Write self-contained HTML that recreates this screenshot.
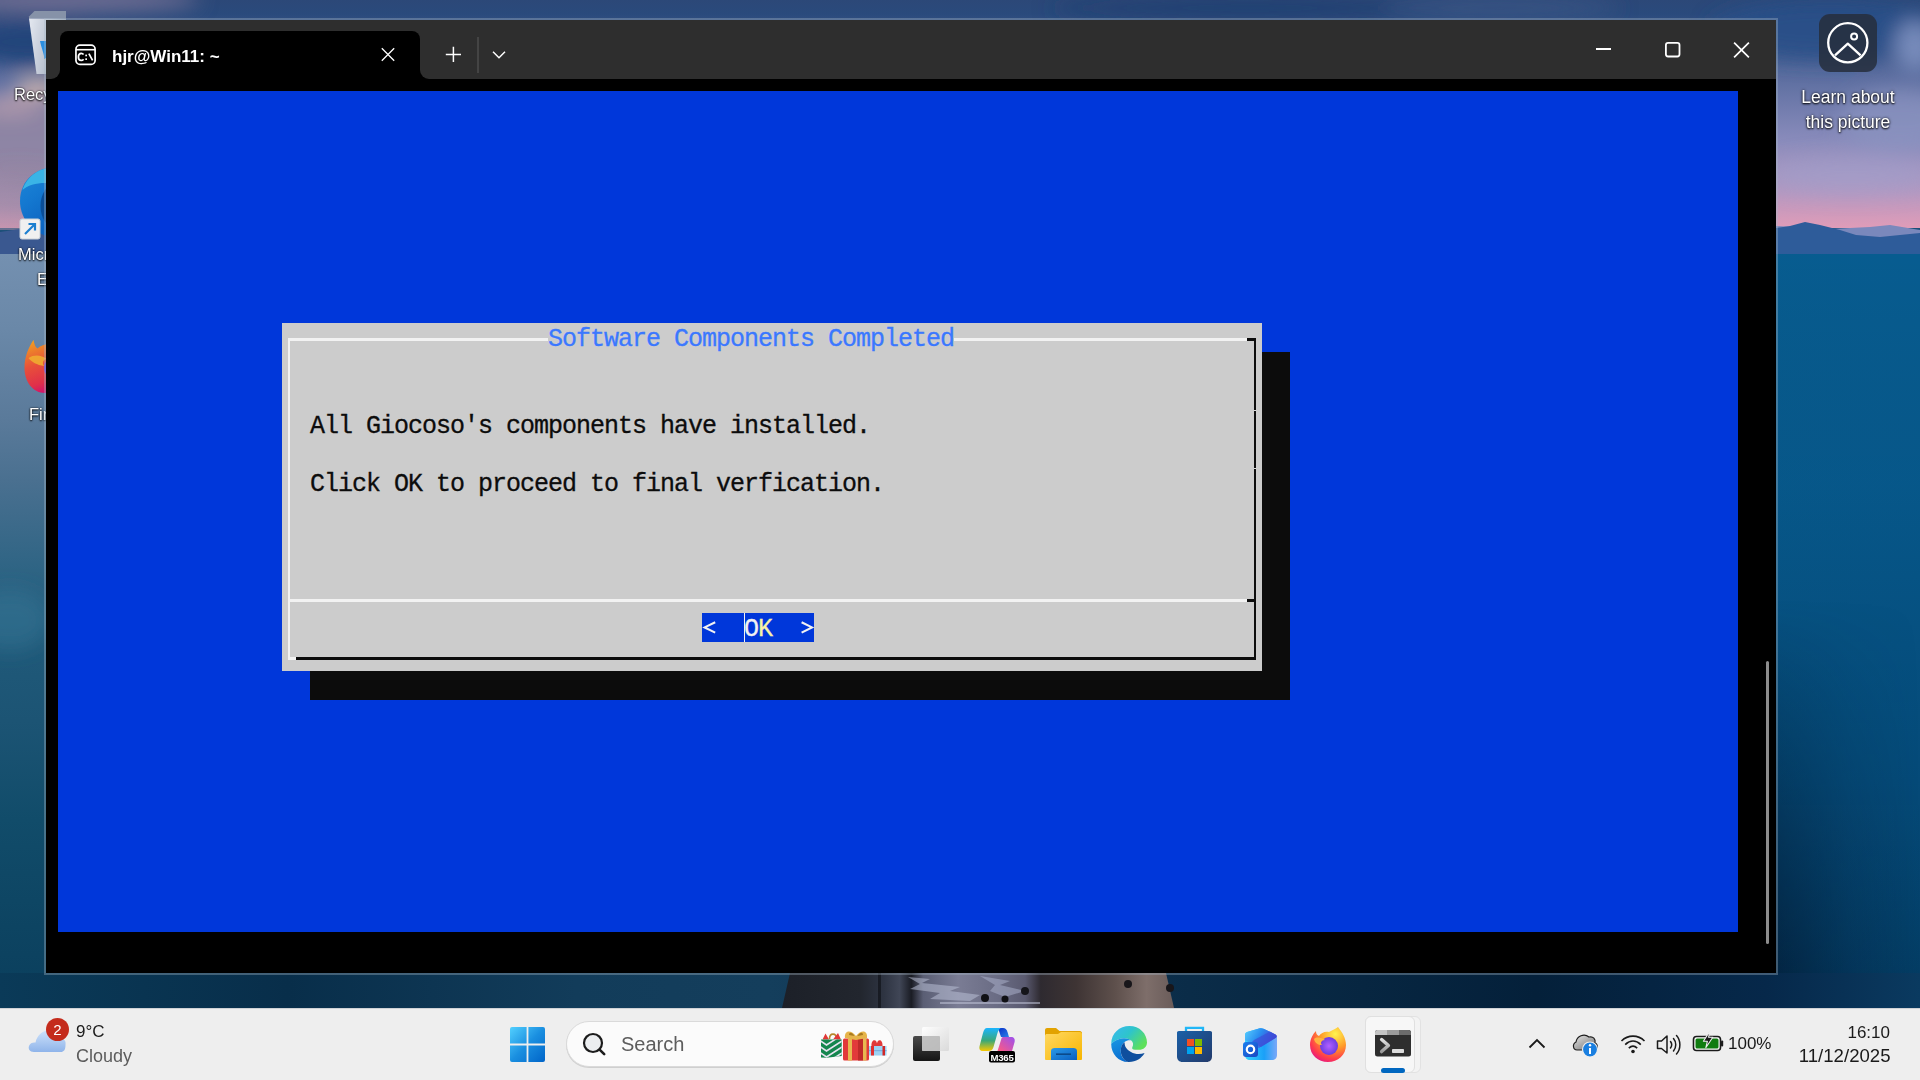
<!DOCTYPE html>
<html><head><meta charset="utf-8">
<style>
*{margin:0;padding:0;box-sizing:border-box}
html,body{width:1920px;height:1080px;overflow:hidden;background:#1a4f78}
body{position:relative;font-family:"Liberation Sans",sans-serif}
.abs{position:absolute}
#wall{left:0;top:0;width:1920px;height:1080px;
 background:
  linear-gradient(180deg,#2a4675 0px,#2e4c7c 30px,#3f5a8c 70px,#55699c 110px,#7a80b4 150px,#9a92c6 185px,#b69ac4 205px,#d39cbc 217px,#c898b8 222px,#52689c 226px,#3f5a90 240px,#2c5888 254px,#1a5c8a 257px,#175a86 350px,#135581 500px,#0f4d76 700px,#0c4369 850px,#0a3656 980px,#0a3352 1080px);}
#wallL{left:0;top:0;width:46px;height:1008px;
 background:linear-gradient(180deg,#5f6890 0px,#2c4a7c 25px,#1f4374 50px,#5c6890 75px,#9a8ea8 95px,#a894ac 130px,#9e8ea8 170px,#b294ae 205px,#c49cb2 218px,#4a5a90 226px,#3a5288 245px,#7894b4 256px,#7090ae 300px,#6888a8 400px,#5a7e9e 470px,#3a6c8c 560px,#1e5c7c 680px,#154f6e 820px,#0e4262 940px,#0b3852 1008px)}
#rightS{left:1776px;top:0;width:144px;height:1008px;
 background:
  radial-gradient(ellipse 90px 40px at 120px 130px,rgba(170,170,210,0.55),rgba(170,170,210,0) 100%),
  radial-gradient(ellipse 120px 30px at 60px 180px,rgba(200,180,220,0.5),rgba(200,180,220,0) 100%),
  linear-gradient(180deg,#2b4a7a 0px,#2f4e80 40px,#4a6496 80px,#5e70a4 115px,#8088bc 150px,#9f96c8 185px,#c49cc4 208px,#dc9cb8 220px,#7e88bc 224px,#4a6298 236px,#3d5a8e 248px,#2a5a88 254px,#1b5e8c 257px,#185b88 400px,#135584 600px,#0f4c78 800px,#0b3c62 940px,#0a3252 1008px)}
#botS{left:0;top:973px;width:1920px;height:35px;background:linear-gradient(90deg,#0c3e5a 0%,#0c3550 20%,#0d3049 40%,#0c2c46 70%,#0b3350 100%)}
#win{left:44px;top:18px;width:1734px;height:957px;background:#000;border:2px solid rgba(170,185,200,0.36);background-clip:padding-box}
#titlebar{left:46px;top:20px;width:1730px;height:59px;background:#2e2e2e}
#tab{left:60px;top:31px;width:360px;height:48px;background:#000;border-radius:8px 8px 0 0}
#term{left:46px;top:79px;width:1730px;height:894px;background:#000}
#blue{left:58px;top:91px;width:1680px;height:841px;background:#0037da}
.dt{color:#fff;font-size:16.5px;line-height:20px;white-space:pre;text-shadow:0 1px 2px #000,0 0 2px rgba(0,0,0,.9)}
.mono{font-family:"Liberation Mono",monospace;font-size:25px;letter-spacing:-1px;line-height:29px;white-space:pre;height:29px;-webkit-text-stroke:0.3px currentColor}
</style></head><body>
<svg class="abs" style="left:0;top:0" width="1920" height="1080" viewBox="0 0 1920 1080">
 <defs>
  <linearGradient id="sky" x1="0" y1="0" x2="0" y2="1">
   <stop offset="0" stop-color="#2c4878"/><stop offset="0.06" stop-color="#2a4a7c"/><stop offset="0.3" stop-color="#566a9c"/>
   <stop offset="0.62" stop-color="#8a8cbc"/><stop offset="0.85" stop-color="#b898c0"/><stop offset="1" stop-color="#e09cb8"/>
  </linearGradient>
  <linearGradient id="lake" x1="0" y1="0" x2="1" y2="0">
   <stop offset="0" stop-color="#0d5c8c"/><stop offset="1" stop-color="#075c90"/>
  </linearGradient>
  <linearGradient id="lakeV" x1="0" y1="0" x2="0" y2="1">
   <stop offset="0" stop-color="#000" stop-opacity="0"/><stop offset="0.3" stop-color="#002040" stop-opacity="0.08"/><stop offset="0.7" stop-color="#002040" stop-opacity="0.3"/><stop offset="1" stop-color="#001830" stop-opacity="0.5"/>
  </linearGradient>
  <linearGradient id="lakeL" x1="0" y1="0" x2="0" y2="1">
   <stop offset="0" stop-color="#7490b0"/><stop offset="0.1" stop-color="#6a88a8"/><stop offset="0.22" stop-color="#5a7a9a"/><stop offset="0.3" stop-color="#4a7090"/><stop offset="0.42" stop-color="#2e6484"/><stop offset="0.5" stop-color="#205a7a"/><stop offset="0.62" stop-color="#1c5474"/><stop offset="0.75" stop-color="#114c6a"/><stop offset="1" stop-color="#0a3e5c"/>
  </linearGradient>
  <filter id="bl" x="-50%" y="-50%" width="200%" height="200%"><feGaussianBlur stdDeviation="10"/></filter>
  <filter id="bl2" x="-50%" y="-50%" width="200%" height="200%"><feGaussianBlur stdDeviation="4"/></filter>
 </defs>
 <rect x="0" y="0" width="1920" height="228" fill="url(#sky)"/>
 <!-- top navy band variation -->
 <g filter="url(#bl)">
  <ellipse cx="60" cy="0" rx="140" ry="12" fill="#7a7498" opacity="0.9"/>
  <ellipse cx="30" cy="42" rx="70" ry="22" fill="#22457a"/>
  <ellipse cx="30" cy="140" rx="70" ry="48" fill="#8e84a2" opacity="0.9"/>
  <ellipse cx="38" cy="86" rx="22" ry="7" fill="#e8c8b0" opacity="0.9"/>
  <ellipse cx="10" cy="105" rx="30" ry="10" fill="#c8a8b0" opacity="0.6"/>
  <ellipse cx="20" cy="190" rx="60" ry="25" fill="#9a88a4" opacity="0.7"/>
  <ellipse cx="1830" cy="30" rx="120" ry="30" fill="#2a5088" opacity="0.9"/>
  <ellipse cx="1915" cy="45" rx="20" ry="25" fill="#8a9ac8" opacity="0.8"/>
  <ellipse cx="1900" cy="120" rx="60" ry="30" fill="#8a94c0" opacity="0.7"/>
  <ellipse cx="1850" cy="175" rx="90" ry="18" fill="#a0a0cc" opacity="0.6"/>
  <ellipse cx="1250" cy="8" rx="200" ry="12" fill="#1e3f70" opacity="0.8"/>
  <ellipse cx="1500" cy="8" rx="120" ry="10" fill="#3e5888" opacity="0.7"/>
 </g>
 <defs><linearGradient id="lpk" x1="0" y1="0" x2="0" y2="1"><stop offset="0" stop-color="#9088a8" stop-opacity="0"/><stop offset="0.7" stop-color="#a08ca8" stop-opacity="0.45"/><stop offset="1" stop-color="#b090a8" stop-opacity="0.5"/></linearGradient></defs>
 <rect x="0" y="150" width="46" height="80" fill="url(#lpk)"/>
 <!-- distant mountains -->
 <path d="M1776 226 L1830 229 L1870 227 L1890 225 L1920 230 L1920 254 L1776 254Z" fill="#7a88bc"/>
 <!-- mountains -->
 <path d="M0 232 L20 229 L40 230 L60 234 L60 254 L0 254Z" fill="#3a5890"/>
 <path d="M1776 228 L1790 226 L1805 222 L1820 225 L1840 230 L1856 235 L1880 237 L1900 235 L1920 233 L1920 254 L1776 254Z" fill="#2e5c9a"/>
 <!-- lake -->
 <rect x="0" y="254" width="1920" height="754" fill="url(#lake)"/>
 <rect x="0" y="254" width="1920" height="754" fill="url(#lakeV)"/>
 <rect x="0" y="254" width="46" height="754" fill="url(#lakeL)"/>
 <g filter="url(#bl)">
  <ellipse cx="10" cy="620" rx="40" ry="30" fill="#3a7898" opacity="0.5"/>
 </g>
 <!-- bottom strip -->
 <defs><linearGradient id="botg" x1="0" y1="0" x2="1" y2="0"><stop offset="0" stop-color="#0a3a58"/><stop offset="0.15" stop-color="#082e4a"/><stop offset="0.3" stop-color="#123c5a"/><stop offset="0.4" stop-color="#143e5c"/><stop offset="0.62" stop-color="#0a2c48"/><stop offset="0.8" stop-color="#04203a"/><stop offset="0.92" stop-color="#06284a"/><stop offset="1" stop-color="#0a3a60"/></linearGradient>
 <linearGradient id="rdark" x1="0" y1="0" x2="1" y2="0"><stop offset="0" stop-color="#021830" stop-opacity="0.7"/><stop offset="0.5" stop-color="#021830" stop-opacity="0.25"/><stop offset="1" stop-color="#021830" stop-opacity="0"/></linearGradient>
 <linearGradient id="rdarkV" x1="0" y1="0" x2="0" y2="1"><stop offset="0" stop-color="#fff" stop-opacity="0"/><stop offset="1" stop-color="#fff" stop-opacity="1"/></linearGradient>
 <mask id="rmask"><rect x="1776" y="600" width="144" height="410" fill="url(#rdarkV)"/></mask></defs>
 <rect x="1776" y="600" width="144" height="410" fill="url(#rdark)" mask="url(#rmask)"/>
 <rect x="0" y="973" width="1920" height="35" fill="url(#botg)"/>
</svg>
<svg class="abs" style="left:780px;top:973px" width="396" height="35" viewBox="0 0 396 35">
 <defs><linearGradient id="rk" x1="0" y1="0" x2="1" y2="0">
  <stop offset="0" stop-color="#1c2028"/><stop offset="0.2" stop-color="#22262e"/><stop offset="0.26" stop-color="#2e3442"/><stop offset="0.3" stop-color="#404656"/>
  <stop offset="0.33" stop-color="#1a1c24"/><stop offset="0.36" stop-color="#5a5e74"/><stop offset="0.45" stop-color="#7a7c94"/><stop offset="0.55" stop-color="#6a6c84"/><stop offset="0.62" stop-color="#5a5a70"/>
  <stop offset="0.66" stop-color="#2e2a30"/><stop offset="0.75" stop-color="#3e3434"/><stop offset="0.85" stop-color="#5e504c"/><stop offset="0.93" stop-color="#7e6e6a"/><stop offset="1" stop-color="#6a5c5a"/>
 </linearGradient></defs>
 <path d="M2 35 L10 0 H386 L394 35Z" fill="url(#rk)"/>
 <g opacity="0.55">
  <path d="M128 4 L150 6 L142 10 L180 14 L170 18 L200 22 L190 28 L150 26 L160 20 L130 16 L140 11Z" fill="#b8bed4"/>
  <path d="M200 3 L230 8 L220 12 L245 18 L225 24 L210 18 L215 12Z" fill="#a8aec8"/>
  <rect x="160" y="29" width="100" height="2" fill="#c0c4d8"/>
 </g>
 <circle cx="205" cy="25" r="4" fill="#101014"/><circle cx="225" cy="26" r="3.5" fill="#101014"/><circle cx="245" cy="18" r="4" fill="#15151a"/>
 <circle cx="348" cy="11" r="4" fill="#18161a"/><circle cx="390" cy="15" r="4" fill="#18161a"/>
 <rect x="98" y="0" width="3" height="35" fill="#0c0e12" opacity="0.6"/>
</svg>

<!-- desktop icons -->
<svg class="abs" style="left:26px;top:11px" width="40" height="66" viewBox="0 0 40 66">
 <defs><linearGradient id="rb" x1="0" y1="0" x2="1" y2="0.3"><stop offset="0" stop-color="#e4e8f0"/><stop offset="0.6" stop-color="#bcc4d2"/><stop offset="1" stop-color="#9aa6b8"/></linearGradient></defs>
 <path d="M3 5.5 L8.5 0 H40 V7.5 H3Z" fill="#8692a8"/>
 <path d="M3 7.5 H40 V63 H10.5 Z" fill="url(#rb)"/>
 <path d="M14 30 C15 36 19 45 18 48 L24 45 C21 42 20 34 21 30Z" fill="#2a8ee0"/>
</svg>
<div class="abs dt" style="left:14px;top:84px">Recycle Bin</div>
<svg class="abs" style="left:16px;top:165px" width="40" height="75" viewBox="0 0 40 75">
 <defs><linearGradient id="de" x1="0" y1="0" x2="0.4" y2="1"><stop offset="0" stop-color="#1e88d8"/><stop offset="0.5" stop-color="#1478d0"/><stop offset="1" stop-color="#0c64c0"/></linearGradient></defs>
 <path d="M40 2 C22 2 4 14 4 36 C4 56 20 72 40 72Z" fill="url(#de)"/>
 <path d="M40 2 C24 2 11 11 6.5 25 C13 19 26 16.5 40 19Z" fill="#3ab4e6"/>
 <path d="M40 17 C31 19 24.5 29 24.5 41 C24.5 53 31 62 40 66Z" fill="#0a4e98"/>
 <rect x="4" y="54" width="20" height="20" rx="2" fill="#f0f0f0" stroke="#c8d0d8" stroke-width="1"/>
 <path d="M9 69 L19 59 M12.5 59 H19 V65.5" stroke="#1b7fd0" stroke-width="2.2" fill="none"/>
</svg>
<div class="abs dt" style="left:18px;top:244px">Microsoft</div>
<div class="abs dt" style="left:37px;top:269px">Edge</div>
<svg class="abs" style="left:22px;top:336px" width="40" height="60" viewBox="0 0 40 60">
 <defs><linearGradient id="dff" x1="0.2" y1="0" x2="0.5" y2="1"><stop offset="0" stop-color="#f0a020"/><stop offset="0.45" stop-color="#e8503a"/><stop offset="0.8" stop-color="#e0304a"/><stop offset="1" stop-color="#d0106e"/></linearGradient></defs>
 <path d="M2.5 32 C2.5 20 7 11 11.5 3.8 C12.5 9 13.5 11 15.5 12.5 C18.5 9.5 23 8 27 8 C33 8 44 16 44 32 C44 46 34 57 23 57 C11 57 2.5 46 2.5 32Z" fill="url(#dff)"/>
 <path d="M6.5 22 C12 18 20 19 24.5 23 C21 23.5 20 27 22 30 C15 29 9.5 26 6.5 22Z" fill="#f0b030" opacity="0.85"/>
 <circle cx="33" cy="32" r="11" fill="#6a3ad0"/>
</svg>
<div class="abs dt" style="left:29px;top:404px">Firefox</div>
<!-- learn about picture -->
<div class="abs" style="left:1819px;top:14px;width:58px;height:58px;border-radius:11px;background:rgba(38,46,60,0.85)"></div>
<svg class="abs" style="left:1824px;top:18px" width="48" height="48" viewBox="0 0 48 48">
 <circle cx="23.8" cy="24.8" r="19.6" fill="none" stroke="#fff" stroke-width="2.3"/>
 <circle cx="30.1" cy="18.6" r="3" fill="none" stroke="#fff" stroke-width="2"/>
 <path d="M11 37.4 L23.8 25.6 L36.6 37.4" fill="none" stroke="#fff" stroke-width="2.3" stroke-linejoin="round"/>
</svg>
<div class="abs" style="left:1788px;top:85px;width:120px;text-align:center;color:#fff;font-size:17.5px;line-height:25px;text-shadow:0 1px 2px #000,0 0 3px rgba(0,0,0,.8)">Learn about<br>this picture</div>
<div id="win" class="abs"></div>
<div id="titlebar" class="abs"></div>
<div id="tab" class="abs"></div>
<div id="term" class="abs"></div>
<!-- tab outward corners -->
<div class="abs" style="left:50px;top:70px;width:10px;height:9px;background:#000"><div style="width:10px;height:9px;background:#2e2e2e;border-bottom-right-radius:9px"></div></div>
<div class="abs" style="left:420px;top:70px;width:10px;height:9px;background:#000"><div style="width:10px;height:9px;background:#2e2e2e;border-bottom-left-radius:9px"></div></div>
<!-- tab icon -->
<svg class="abs" style="left:70px;top:40px" width="32" height="30" viewBox="0 0 32 30">
 <rect x="5.95" y="5.2" width="19.15" height="19.2" rx="4" ry="4" fill="none" stroke="#fff" stroke-width="1.7"/>
 <line x1="6" y1="9.7" x2="25" y2="9.7" stroke="#fff" stroke-width="1.6"/>
 <path d="M13.6 14.6 C13 13.8 12.2 13.4 11.2 13.4 C9.5 13.4 8.4 14.8 8.4 16.9 C8.4 19 9.5 20.4 11.2 20.4 C12.2 20.4 13 20 13.6 19.2" fill="none" stroke="#fff" stroke-width="1.7"/>
 <rect x="15.3" y="14.6" width="1.7" height="1.7" fill="#fff"/><rect x="15.3" y="18.3" width="1.7" height="1.7" fill="#fff"/>
 <line x1="18.9" y1="13.6" x2="22.6" y2="20.4" stroke="#fff" stroke-width="1.7"/>
</svg>
<div class="abs" style="left:112px;top:45.5px;font-weight:bold;font-size:17px;color:#fff;line-height:22px;white-space:pre">hjr@Win11: ~</div>
<!-- tab close -->
<svg class="abs" style="left:380px;top:47px" width="16" height="16" viewBox="0 0 16 16"><path d="M1.8 1.2 L14.2 13.8 M14.2 1.2 L1.8 13.8" stroke="#fff" stroke-width="1.3"/></svg>
<!-- plus -->
<svg class="abs" style="left:444px;top:45px" width="18" height="18" viewBox="0 0 18 18"><path d="M9.4 1.8 V17 M1.8 9.4 H17" stroke="#fff" stroke-width="1.5"/></svg>
<div class="abs" style="left:477px;top:37px;width:2px;height:36px;background:#444"></div>
<svg class="abs" style="left:490px;top:48px" width="18" height="14" viewBox="0 0 18 14"><path d="M3 3.8 L9 9.8 L15 3.8" fill="none" stroke="#fff" stroke-width="1.5"/></svg>
<!-- window controls -->
<div class="abs" style="left:1596px;top:48px;width:15px;height:2px;background:#fff"></div>
<svg class="abs" style="left:1663px;top:40px" width="20" height="20" viewBox="0 0 20 20"><rect x="2.9" y="2.9" width="13.6" height="13.6" rx="2.2" fill="none" stroke="#fff" stroke-width="1.8"/></svg>
<svg class="abs" style="left:1731px;top:40px" width="20" height="20" viewBox="0 0 20 20"><path d="M3.1 2.6 L17.9 17.4 M17.9 2.6 L3.1 17.4" stroke="#fff" stroke-width="1.7"/></svg>
<div id="blue" class="abs"></div>
<div class="abs" style="left:1765.5px;top:661px;width:3px;height:283px;border-radius:1.5px;background:#8c8c8c"></div>

<!-- dialog shadow -->
<div class="abs" style="left:310px;top:352px;width:980px;height:348px;background:#0c0c0c"></div>
<!-- dialog -->
<div class="abs" style="left:282px;top:323px;width:980px;height:348px;background:#cccccc"></div>
<!-- borders -->
<div class="abs" style="left:288px;top:338px;width:260px;height:3px;background:#f2f2f2"></div>
<div class="abs" style="left:954px;top:338px;width:294px;height:3px;background:#f2f2f2"></div>
<div class="abs" style="left:1247px;top:338px;width:9px;height:3px;background:#0c0c0c"></div>
<div class="abs" style="left:288px;top:338px;width:2px;height:322px;background:#f2f2f2"></div>
<div class="abs" style="left:1254px;top:338px;width:2px;height:322px;background:#0c0c0c"></div>
<div class="abs" style="left:288px;top:599px;width:960px;height:3px;background:#f2f2f2"></div>
<div class="abs" style="left:1247px;top:599px;width:9px;height:3px;background:#0c0c0c"></div>
<div class="abs" style="left:1254px;top:410px;width:2px;height:1px;background:#dcdcdc"></div>
<div class="abs" style="left:1254px;top:468px;width:2px;height:1px;background:#dcdcdc"></div>
<div class="abs" style="left:288px;top:657px;width:8px;height:3px;background:#f2f2f2"></div>
<div class="abs" style="left:296px;top:657px;width:960px;height:3px;background:#0c0c0c"></div>
<!-- title -->
<div class="abs mono" style="left:548px;top:325px;color:#3b78ff">Software Components Completed</div>
<div class="abs mono" style="left:310px;top:412px;color:#0c0c0c">All Giocoso's components have installed.</div>
<div class="abs mono" style="left:310px;top:470px;color:#0c0c0c">Click OK to proceed to final verfication.</div>
<!-- button -->
<div class="abs" style="left:702px;top:613px;width:112px;height:29px;background:#0037da"></div>
<svg class="abs" style="left:700px;top:613px" width="20" height="29" viewBox="0 0 20 29"><path d="M15.2 9.2 L4.6 14.4 L15.2 19.6" fill="none" stroke="#f2f2f2" stroke-width="2.1" stroke-linejoin="miter"/></svg>
<div class="abs mono" style="left:744px;top:615px;color:#f2f2f2">O</div>
<div class="abs mono" style="left:758px;top:615px;color:#f9f1a5">K</div>
<svg class="abs" style="left:797px;top:613px" width="20" height="29" viewBox="0 0 20 29"><path d="M4.6 9.2 L15 14.4 L4.6 19.6" fill="none" stroke="#f2f2f2" stroke-width="2.1" stroke-linejoin="miter"/></svg>
<div class="abs" style="left:744px;top:613px;width:1px;height:29px;background:#f2f2f2"></div>


<!-- TASKBAR -->
<div class="abs" style="left:0;top:1008px;width:1920px;height:72px;background:#eeeeee;border-top:1px solid #cfd2d6"></div>
<!-- weather -->
<svg class="abs" style="left:26px;top:1016px" width="50" height="40" viewBox="0 0 50 40">
 <defs><linearGradient id="cg" x1="0" y1="0" x2="0" y2="1"><stop offset="0" stop-color="#cfe3fb"/><stop offset="1" stop-color="#8fb4ea"/></linearGradient></defs>
 <path d="M8 36 C3.5 36 2 32.5 3 30 C4 27 7 26 9.5 26.5 C11 19 17 14 24 14 C31 14 35 18.5 36.5 23 C39 23.5 40 26 39.5 29 C39.5 34 37.5 36 35 36 Z" fill="url(#cg)"/>
 <circle cx="31.5" cy="13.5" r="11.5" fill="#c42b1c"/>
 <text x="31.5" y="19" text-anchor="middle" font-family="Liberation Sans" font-size="15" fill="#fff">2</text>
</svg>
<div class="abs" style="left:76px;top:1021.5px;font-size:17px;line-height:20px;color:#1b1b1b">9°C</div>
<div class="abs" style="left:76px;top:1046px;font-size:18px;line-height:20px;color:#5c5c5c">Cloudy</div>
<!-- start -->
<svg class="abs" style="left:510px;top:1027px" width="35" height="35" viewBox="0 0 35 35">
 <defs><linearGradient id="wg" x1="0" y1="0" x2="1" y2="1"><stop offset="0" stop-color="#52d0ff"/><stop offset="0.5" stop-color="#1a8fe0"/><stop offset="1" stop-color="#0064c8"/></linearGradient></defs>
 <path d="M2 0 H16.6 V16.6 H0 V2 A2 2 0 0 1 2 0Z M18.4 0 H33 A2 2 0 0 1 35 2 V16.6 H18.4Z M0 18.4 H16.6 V35 H2 A2 2 0 0 1 0 33Z M18.4 18.4 H35 V33 A2 2 0 0 1 33 35 H18.4Z" fill="url(#wg)"/>
</svg>
<!-- search -->
<div class="abs" style="left:566px;top:1021px;width:328px;height:46px;border-radius:23px;background:#fbfbfb;border:1px solid #dadada;box-shadow:0 1px 0 #cfcfcf"></div>
<svg class="abs" style="left:580px;top:1030px" width="28" height="28" viewBox="0 0 28 28"><circle cx="13" cy="13" r="9" fill="#eceef0" stroke="#1c1c1c" stroke-width="2.2"/><path d="M19.6 19.6 L24.2 24.2" stroke="#1c1c1c" stroke-width="2.6" stroke-linecap="round"/></svg>
<div class="abs" style="left:621px;top:1032px;font-size:20px;line-height:24px;color:#5d5d5d">Search</div>
<!-- gifts -->
<svg class="abs" style="left:815px;top:1022px" width="80" height="44" viewBox="0 0 80 44">
 <defs><clipPath id="bagc"><path d="M6 17.5 H26.7 V34 L11.5 35.8 L6 35.5Z"/></clipPath></defs>
 <path d="M14.5 17 C14.5 10.5 21.5 10.5 21.5 17" fill="none" stroke="#b8862a" stroke-width="1.6"/>
 <path d="M7.5 17.5 L10.5 11.5 L14 17.5Z M18 17.5 L23 11 L26 17.5Z" fill="#e03838"/>
 <path d="M6 17.5 H26.7 V34 L11.5 35.8 L6 35.5Z" fill="#14864e"/>
 <g clip-path="url(#bagc)" stroke="#e6e2f0" stroke-width="1.6" fill="none">
  <path d="M4 18 L11.5 23 L30 11"/><path d="M4 24 L11.5 29 L30 17"/><path d="M4 30 L11.5 35 L30 23"/><path d="M4 36 L11.5 41 L30 29"/><path d="M10 42 L30 35"/>
 </g>
 <rect x="28" y="16.5" width="26" height="22" rx="1.5" fill="#e23a3a"/>
 <rect x="43" y="16.5" width="5" height="22" fill="#c02a2a"/>
 <rect x="33" y="16.5" width="4" height="22" fill="#e8b850"/>
 <rect x="48" y="16.5" width="3.5" height="22" fill="#e8b850"/>
 <path d="M30 16 C29 9 35 6.5 41 14 C47 6.5 53 9 52 16 L41 18Z" fill="#e6b44a"/>
 <path d="M34 13 C34 10 37 10 39.5 14Z M42.5 14 C45 10 48 10 48 13Z" fill="#a87a20"/>
 <rect x="54" y="24" width="17.5" height="9.5" fill="#9cd2f4"/>
 <rect x="54" y="28" width="17.5" height="1.2" fill="#7ab0e0"/>
 <rect x="56" y="24" width="3" height="9.5" fill="#e03030"/><rect x="67.5" y="24" width="2.5" height="9.5" fill="#d02828"/>
 <path d="M56.5 24 C56 17 61.5 16.5 62 21.5 C62.5 16.5 68 17 67.5 24Z" fill="#e03a3a"/>
</svg>
<!-- task view -->
<svg class="abs" style="left:910px;top:1024px" width="42" height="40" viewBox="0 0 42 40">
 <defs><linearGradient id="tv1" x1="0" y1="0" x2="0" y2="1"><stop offset="0" stop-color="#4a4a4a"/><stop offset="1" stop-color="#151515"/></linearGradient>
 <linearGradient id="tv2" x1="0" y1="0" x2="1" y2="1"><stop offset="0" stop-color="#ffffff" stop-opacity="0.95"/><stop offset="1" stop-color="#d8d8d8" stop-opacity="0.9"/></linearGradient></defs>
 <rect x="3" y="12" width="27" height="25" rx="2" fill="url(#tv1)"/>
 <rect x="12" y="3" width="27" height="24" rx="1.5" fill="url(#tv2)"/>
 <rect x="12" y="12" width="18" height="15" rx="1" fill="#b8b8b8" opacity="0.85"/>
</svg>
<!-- copilot m365 -->
<svg class="abs" style="left:970px;top:1020px" width="50" height="48" viewBox="0 0 50 48">
 <defs><linearGradient id="cp1" x1="0" y1="0" x2="0" y2="1"><stop offset="0" stop-color="#1ab4ff"/><stop offset="0.55" stop-color="#3aa878"/><stop offset="1" stop-color="#f8c800"/></linearGradient>
 <linearGradient id="cp2" x1="1" y1="0" x2="0" y2="1"><stop offset="0" stop-color="#9a50f0"/><stop offset="1" stop-color="#ff5a80"/></linearGradient>
 <linearGradient id="cp3" x1="0" y1="0" x2="1" y2="1"><stop offset="0" stop-color="#0a30c8"/><stop offset="1" stop-color="#2a80e8"/></linearGradient></defs>
 <path d="M28 8 H33 C35.5 8 36.5 9.5 37.5 12 L39 17 H31 Z" fill="url(#cp3)"/>
 <path d="M17 8 H32 C29.5 8 28.5 10 27.5 13 L23.5 27 C22.5 30 21 31 18 31 H13 C10 31 8.8 29 9.6 26 L13 13 C14 9.5 15 8 17 8Z" fill="url(#cp1)"/>
 <path d="M33 17 H41 C44 17 45.3 19 44.6 22 L42 31 H27.5 L31 20 C31.5 18 32 17 33 17Z" fill="url(#cp2)"/>
 <rect x="19" y="31" width="26" height="11.5" rx="2" fill="#000"/>
 <text x="32" y="40.6" text-anchor="middle" font-family="Liberation Sans" font-weight="bold" font-size="9.6" fill="#fff" letter-spacing="-0.2">M365</text>
</svg>
<!-- explorer -->
<svg class="abs" style="left:1044px;top:1026px" width="40" height="38" viewBox="0 0 40 38">
 <defs><linearGradient id="fy" x1="0" y1="0" x2="1" y2="1"><stop offset="0" stop-color="#ffd862"/><stop offset="1" stop-color="#f7b500"/></linearGradient>
 <linearGradient id="fb" x1="0" y1="0" x2="1" y2="1"><stop offset="0" stop-color="#2a9ae8"/><stop offset="1" stop-color="#0a5ec0"/></linearGradient></defs>
 <path d="M1 4 C1 2.8 2 2 3 2 H12 L15.5 5 H36 C37 5 38 6 38 7 V20 H1 Z" fill="#e2a200"/>
 <path d="M1 10 C1 8.5 2 8 3 8 H14 L17 6 H36 C37 6 38 7 38 8 V33 C38 34 37 34 36 34 H3 C2 34 1 34 1 33Z" fill="url(#fy)"/>
 <path d="M7 34 V25 C7 23 8.5 22 10.5 22 H29.5 C31.5 22 33 23 33 25 V34Z" fill="url(#fb)"/>
 <rect x="12" y="27.4" width="15" height="1.6" fill="#0b4a8a"/>
</svg>
<!-- edge -->
<svg class="abs" style="left:1105px;top:1020px" width="50" height="48" viewBox="0 0 50 48">
 <defs><linearGradient id="eg1" x1="0" y1="0" x2="1" y2="0.6"><stop offset="0" stop-color="#3ab8f2"/><stop offset="0.5" stop-color="#2ec4cc"/><stop offset="1" stop-color="#5ee05a"/></linearGradient>
 <linearGradient id="eg2" x1="0" y1="0" x2="0.3" y2="1"><stop offset="0" stop-color="#1a98e4"/><stop offset="1" stop-color="#0a6ed0"/></linearGradient></defs>
 <path d="M6.2 24 C6.2 13 14.5 6 24.5 6 C34.5 6 42 13.5 42 22.5 C42 27 38.5 29.8 34 29.8 H30 C27.6 29.8 26.6 28.4 27.4 27 C28.6 25 28.4 22 26 20.3 C22.8 18 17.5 17.6 13 19.6 C9.5 21 7.2 22.8 6.2 24Z" fill="url(#eg1)"/>
 <path d="M6.2 24 C6.2 34 13.5 42 23 42 C16.5 39.5 14.6 32 16.4 26.5 C17.8 22.4 21.5 19.6 26 20.3 C22.8 18 17.5 17.6 13 19.6 C9.5 21 7.2 22.8 6.2 24Z" fill="url(#eg2)"/>
 <path d="M23 42 C30.5 42.4 36.5 38.5 39.6 33 C35 34.6 30 34.4 26 32 C21.5 29.4 19 25.6 19.8 22.2 C17.6 23.6 16.6 25 16.2 27 C14.8 33 17 39.6 23 42Z" fill="#0f4f9e"/>
</svg>
<!-- store -->
<svg class="abs" style="left:1170px;top:1020px" width="50" height="48" viewBox="0 0 50 48">
 <defs><linearGradient id="sg" x1="0" y1="0" x2="1" y2="1"><stop offset="0" stop-color="#1a60a8"/><stop offset="1" stop-color="#233a6a"/></linearGradient>
 <linearGradient id="sh" x1="0" y1="0" x2="0" y2="1"><stop offset="0" stop-color="#22b8f8"/><stop offset="1" stop-color="#12a0e8"/></linearGradient></defs>
 <path d="M16 13.5 V7.8 H33 V13.5" fill="none" stroke="url(#sh)" stroke-width="2.3"/>
 <path d="M7 12.8 C7 11.7 7.8 11 8.8 11 H40.2 C41.2 11 42 11.7 42 12.8 V36.5 C42 39.8 39.8 42 36.5 42 H12.5 C9.2 42 7 39.8 7 36.5 Z" fill="url(#sg)"/>
 <rect x="17" y="19" width="7" height="7" fill="#f25022"/><rect x="25" y="19" width="7" height="7" fill="#7fba00"/>
 <rect x="17" y="27" width="7" height="7" fill="#00a4ef"/><rect x="25" y="27" width="7" height="7" fill="#ffb900"/>
</svg>
<!-- outlook -->
<svg class="abs" style="left:1240px;top:1024px" width="42" height="40" viewBox="0 0 42 40">
 <defs><linearGradient id="o1" x1="0" y1="0" x2="1" y2="0.4"><stop offset="0" stop-color="#58d0ff"/><stop offset="0.5" stop-color="#2a8ef0"/><stop offset="1" stop-color="#4a3ad0"/></linearGradient>
 <linearGradient id="o2" x1="0" y1="0" x2="1" y2="0"><stop offset="0" stop-color="#38d4ff"/><stop offset="0.6" stop-color="#1aa0f8"/><stop offset="1" stop-color="#7aa8f8"/></linearGradient>
 <linearGradient id="o3" x1="0" y1="0" x2="1" y2="1"><stop offset="0" stop-color="#1a80f0"/><stop offset="1" stop-color="#1a44c0"/></linearGradient></defs>
 <path d="M5 10.5 C5 9.5 6 8.5 7 8 L19 4.5 C20.5 4 22 4 23.5 4.7 L35.5 10.5 C37 11.3 37 12.6 37 13.5 V31 C37 34 35 36 32 36 H10 C7 36 5 34 5 31 Z" fill="url(#o2)"/>
 <path d="M5 10.5 C5 9.5 6 8.5 7 8 L19 4.5 C20.5 4 22 4 23.5 4.7 L35.5 10.5 C37 11.5 37 13 35.5 14 L19 24 L5 16Z" fill="url(#o1)"/>
 <path d="M14 16 L30 7.5 L36 11 C37 12 37 13 35.5 14 L21 23 L12 18Z" fill="#3a4ed8" opacity="0.7"/>
 <rect x="3" y="18" width="15" height="15" rx="3" fill="url(#o3)"/>
 <circle cx="10.5" cy="25.4" r="3.7" fill="none" stroke="#fff" stroke-width="2.2"/>
</svg>
<!-- firefox -->
<svg class="abs" style="left:1308px;top:1024px" width="40" height="40" viewBox="0 0 40 40">
 <defs><radialGradient id="ff1" cx="0.7" cy="0.2" r="0.9"><stop offset="0" stop-color="#fff44f"/><stop offset="0.45" stop-color="#ff9a28"/><stop offset="0.8" stop-color="#ff3b4c"/><stop offset="1" stop-color="#e31587"/></radialGradient>
 <radialGradient id="ff2" cx="0.5" cy="0.5" r="0.5"><stop offset="0" stop-color="#b361ff"/><stop offset="1" stop-color="#6b3ce0"/></radialGradient></defs>
 <path d="M30 3 C34 8 38 14 38 21 C38 31 30 38 20 38 C10 38 2 31 2 21 C2 15 5 10 8 7 C8 10 9 11 11 12 C13 9 17 7 21 8 C24 6 28 5 30 3Z" fill="url(#ff1)"/>
 <circle cx="21" cy="22" r="9" fill="url(#ff2)"/>
 <path d="M6 15 C9 12 14 14 17 16 C13 16 12 19 14 21 C10 21 7 19 6 15Z" fill="#ffb340"/>
</svg>
<!-- terminal active -->
<div class="abs" style="left:1365px;top:1016px;width:56px;height:57px;border-radius:6px;background:#f3f3f3;border:1px solid #e2e2e2"></div>
<div class="abs" style="left:1365px;top:1016px;width:50px;height:57px;border-radius:6px;background:#f7f7f7;border:1px solid #e0e0e0"></div>
<svg class="abs" style="left:1373px;top:1028px" width="40" height="32" viewBox="0 0 40 32">
 <defs><linearGradient id="tp" x1="0" y1="0" x2="0" y2="1"><stop offset="0" stop-color="#e0e0e0"/><stop offset="1" stop-color="#9a9a9a"/></linearGradient></defs>
 <rect x="2" y="2" width="36" height="26.6" rx="2.5" fill="#2e2e2e"/>
 <path d="M2 4.5 C2 3 3 2 4.5 2 H14 V7 H2Z" fill="#c4c4c4"/>
 <rect x="14" y="2" width="12" height="5" fill="#9c9c9c"/>
 <path d="M26 2 H35.5 C37 2 38 3 38 4.5 V7 H26Z" fill="#6c6c6c"/>
 <path d="M8.6 11.6 L15.4 17.6 L8.6 23.6" fill="none" stroke="url(#tp)" stroke-width="3.4" stroke-linecap="round" stroke-linejoin="round"/>
 <rect x="19" y="21" width="12" height="4" rx="0.8" fill="#dcdcdc"/>
</svg>
<div class="abs" style="left:1381px;top:1068px;width:24px;height:5px;border-radius:3px;background:#0067c0"></div>
<!-- tray -->
<svg class="abs" style="left:1526px;top:1034px" width="22" height="18" viewBox="0 0 22 18"><path d="M3.5 13.5 L11 6 L18.5 13.5" fill="none" stroke="#1a1a1a" stroke-width="1.8"/></svg>
<svg class="abs" style="left:1570px;top:1030px" width="32" height="30" viewBox="0 0 32 30">
 <defs><linearGradient id="od" x1="0" y1="0" x2="1" y2="1"><stop offset="0" stop-color="#e8e8e8"/><stop offset="1" stop-color="#6a6a6a"/></linearGradient></defs>
 <path d="M7 20 C3 20 2 14 6 12 C7 6 14 3 19 7 C23 6 26 9 25 13 C28 14 28 19 25 20Z" fill="url(#od)" stroke="#1e1e1e" stroke-width="1.2"/>
 <circle cx="20" cy="19.5" r="7.5" fill="#1a7fe0" stroke="#eeeeee" stroke-width="1.2"/>
 <rect x="19" y="18" width="2" height="6" fill="#fff"/><circle cx="20" cy="15.3" r="1.2" fill="#fff"/>
</svg>
<svg class="abs" style="left:1619px;top:1032px" width="28" height="24" viewBox="0 0 28 24">
 <path d="M2.5 9 C9 2.5 19 2.5 25.5 9" fill="none" stroke="#1a1a1a" stroke-width="1.6"/>
 <path d="M6.2 12.6 C11 8 17 8 21.8 12.6" fill="none" stroke="#1a1a1a" stroke-width="1.6"/>
 <path d="M9.8 16.2 C12.5 13.6 15.5 13.6 18.2 16.2" fill="none" stroke="#1a1a1a" stroke-width="1.6"/>
 <circle cx="14" cy="19.5" r="1.8" fill="#1a1a1a"/>
</svg>
<svg class="abs" style="left:1655px;top:1032px" width="28" height="26" viewBox="0 0 28 26">
 <path d="M2.5 9 H6.5 L12 4 V21 L6.5 16.5 H2.5Z" fill="none" stroke="#1a1a1a" stroke-width="1.5" stroke-linejoin="round"/>
 <path d="M15.5 9.5 C17 11.5 17 14 15.5 16" fill="none" stroke="#1a1a1a" stroke-width="1.5" stroke-linecap="round"/>
 <path d="M18.5 6.5 C21.5 10 21.5 15.5 18.5 19" fill="none" stroke="#1a1a1a" stroke-width="1.5" stroke-linecap="round"/>
 <path d="M21.5 3.5 C26 8.5 26 17 21.5 22" fill="none" stroke="#1a1a1a" stroke-width="1.5" stroke-linecap="round"/>
</svg>
<svg class="abs" style="left:1691px;top:1030px" width="34" height="24" viewBox="0 0 34 24">
 <rect x="2.5" y="6.5" width="27" height="14" rx="3" fill="#fff" stroke="#1a1a1a" stroke-width="1.6"/>
 <rect x="4.5" y="8.5" width="23" height="10" rx="1.5" fill="#107c10"/>
 <rect x="30" y="10.5" width="2.2" height="6" rx="1" fill="#1a1a1a"/>
 <path d="M19.2 0.6 L12.4 11.2 H16.4 L14.8 17.8 L21.8 7.2 H17.6 Z" fill="#1a1a1a" stroke="#eeeeee" stroke-width="1.1" stroke-linejoin="round"/>
</svg>
<div class="abs" style="left:1728px;top:1034px;font-size:17px;line-height:20px;color:#1a1a1a">100%</div>
<div class="abs" style="left:1790px;top:1022.5px;width:100px;text-align:right;font-size:17px;line-height:20px;color:#1a1a1a">16:10</div>
<div class="abs" style="left:1790px;top:1046px;width:100.5px;text-align:right;font-size:18.6px;line-height:20px;color:#1a1a1a">11/12/2025</div>
</body></html>
